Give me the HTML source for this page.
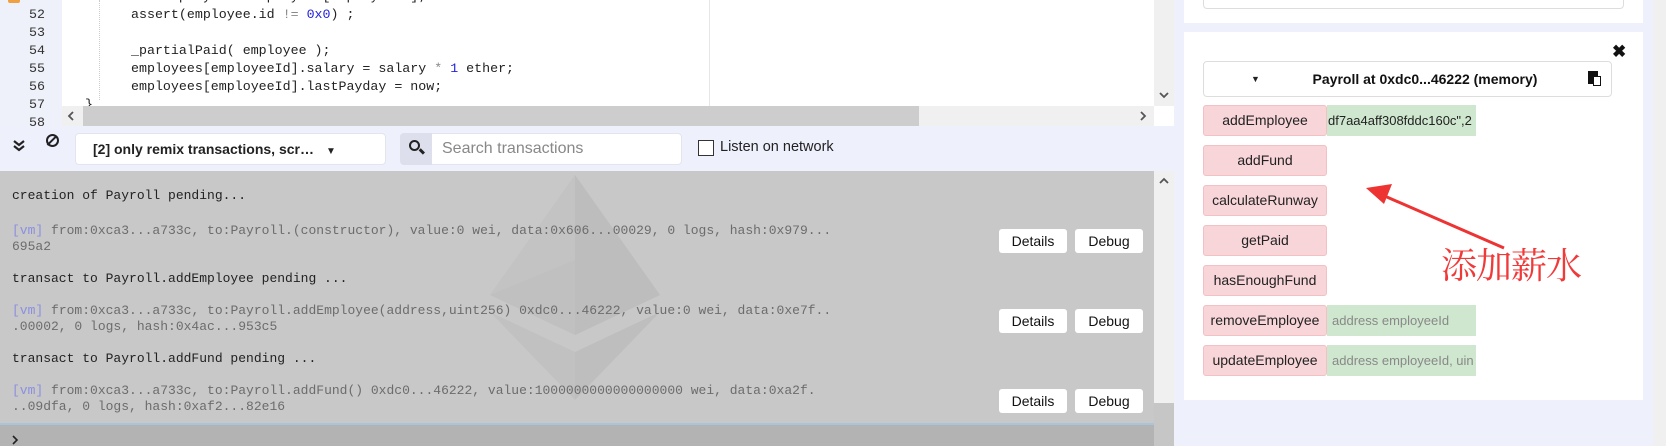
<!DOCTYPE html>
<html><head><meta charset="utf-8"><style>
*{margin:0;padding:0;box-sizing:border-box}
body{width:1666px;height:446px;overflow:hidden;position:relative;background:#eef0fc;font-family:"Liberation Sans",sans-serif}
.a{position:absolute}
.code{font-family:"Liberation Mono",monospace;font-size:13.3px;color:#222;white-space:pre;line-height:18px}
.ln{font-family:"Liberation Mono",monospace;font-size:13.3px;color:#333;text-align:right;width:45px;line-height:18px}
.term{font-family:"Liberation Mono","Noto Serif CJK SC",monospace;font-size:13px;white-space:pre;line-height:16px}
.g{color:#6c6c6c}.vm{color:#8b8fe0}
.tb{background:#fff;border-radius:3px;font-size:14px;text-align:center;line-height:24px;height:24px;width:68px;color:#111}
.fb{left:1203px;width:124px;height:31px;background:#f8d5d8;border:1px solid #f3c0c3;border-radius:3px;font-size:14px;text-align:center;line-height:29px;color:#222}
.in{left:1327px;width:149px;height:31px;background:#cfe7cf;font-size:13px;line-height:31px;padding-left:5px;color:#888;overflow:hidden;white-space:nowrap}
</style></head><body>
<!-- editor -->
<div class="a" style="left:0;top:0;width:62px;height:126px;background:#eef0fa"></div>
<div class="a" style="left:8px;top:-4px;width:12px;height:7px;background:#f0a040;border-radius:2px"></div>
<div class="a" style="left:62px;top:0;width:1092px;height:106px;background:#fff"></div>
<div class="a" style="left:709px;top:0;width:1px;height:106px;background:#e6e6e6"></div>
<div class="a" style="left:99px;top:0;width:0;height:100px;border-left:1px dotted #ccc"></div>
<div class="a ln" style="left:0;top:-12px">51<br>52<br>53<br>54<br>55<br>56<br>57<br>58</div>
<div class="a code" style="left:131px;top:-12px">var employee = employees[employeeId];
assert(employee.id <span style="color:#888">!=</span> <span style="color:#22d">0x0</span>) ;

_partialPaid( employee );
employees[employeeId].salary = salary <span style="color:#888">*</span> <span style="color:#22d">1</span> ether;
employees[employeeId].lastPayday = now;</div>
<div class="a code" style="left:85px;top:96px">}</div>
<div class="a" style="left:62px;top:106px;width:1092px;height:20px;background:#f0f0f0"></div>
<div class="a" style="left:83px;top:106px;width:836px;height:20px;background:#cdcdcd"></div>
<svg class="a" style="left:66px;top:110px" width="10" height="12"><path d="M7 2 L3 6 L7 10" stroke="#555" stroke-width="1.8" fill="none"/></svg>
<svg class="a" style="left:1138px;top:110px" width="10" height="12"><path d="M3 2 L7 6 L3 10" stroke="#555" stroke-width="1.8" fill="none"/></svg>
<div class="a" style="left:1154px;top:0;width:20px;height:106px;background:#f0f0f0"></div>
<svg class="a" style="left:1158px;top:90px" width="12" height="10"><path d="M2 3 L6 7 L10 3" stroke="#555" stroke-width="1.8" fill="none"/></svg>
<div class="a" style="left:1154px;top:106px;width:20px;height:20px;background:#fff"></div>
<!-- toolbar -->
<svg class="a" style="left:12px;top:139px" width="14" height="14"><path d="M2 2 L7 6 L12 2 M2 7 L7 11 L12 7" stroke="#222" stroke-width="2.2" fill="none"/></svg>
<div class="a" style="left:46px;top:134px;width:13px;height:13px;border:2px solid #222;border-radius:50%"></div>
<div class="a" style="left:51px;top:134px;width:2px;height:13px;background:#222;transform:rotate(45deg)"></div>
<div class="a" style="left:75px;top:133px;width:311px;height:32px;background:#fff;border:1px solid #e2e4ee;border-radius:4px;font-size:14px;font-weight:bold;line-height:30px;padding-left:17px;color:#222">[2] only remix transactions, scr…<span style="font-size:10px;margin-left:12px">▼</span></div>
<div class="a" style="left:400px;top:133px;width:282px;height:32px;background:#fff;border:1px solid #e2e4ee;border-radius:4px"></div>
<div class="a" style="left:400px;top:133px;width:32px;height:32px;background:#dde0ec;border-radius:4px 0 0 4px"></div>
<div class="a" style="left:409px;top:140px;width:11px;height:11px;border:2.5px solid #222;border-radius:50%"></div>
<div class="a" style="left:419px;top:150px;width:6px;height:2.5px;background:#222;transform:rotate(45deg)"></div>
<div class="a" style="left:442px;top:140px;font-size:16px;color:#888">Search transactions</div>
<div class="a" style="left:698px;top:140px;width:16px;height:16px;border:1px solid #333;background:#fff"></div>
<div class="a" style="left:720px;top:139px;font-size:14.5px;color:#222">Listen on network</div>
<!-- terminal -->
<div class="a" style="left:0;top:171px;width:1154px;height:252px;background:#c8c8c8"></div>
<svg class="a" style="left:490px;top:175px" width="170" height="225" viewBox="0 0 170 225">
<polygon points="85,0 0,120 85,160 170,120" fill="#c0c0c0"/>
<polygon points="85,0 85,160 170,120" fill="#bdbdbd"/>
<polygon points="85,0 0,120 85,85" fill="#c3c3c3"/>
<polygon points="0,137 85,225 85,177" fill="#c1c1c1"/>
<polygon points="170,137 85,225 85,177" fill="#bebebe"/>
</svg>
<div class="a term" style="left:12px;top:188px;color:#222">creation of Payroll pending...</div>
<div class="a term g" style="left:12px;top:223px"><span class="vm">[vm]</span> from:0xca3...a733c, to:Payroll.(constructor), value:0 wei, data:0x606...00029, 0 logs, hash:0x979...
695a2</div>
<div class="a term" style="left:12px;top:271px;color:#222">transact to Payroll.addEmployee pending ...</div>
<div class="a term g" style="left:12px;top:303px"><span class="vm">[vm]</span> from:0xca3...a733c, to:Payroll.addEmployee(address,uint256) 0xdc0...46222, value:0 wei, data:0xe7f..
.00002, 0 logs, hash:0x4ac...953c5</div>
<div class="a term" style="left:12px;top:351px;color:#222">transact to Payroll.addFund pending ...</div>
<div class="a term g" style="left:12px;top:383px"><span class="vm">[vm]</span> from:0xca3...a733c, to:Payroll.addFund() 0xdc0...46222, value:1000000000000000000 wei, data:0xa2f.
..09dfa, 0 logs, hash:0xaf2...82e16</div>
<div class="a tb" style="left:999px;top:229px">Details</div><div class="a tb" style="left:1075px;top:229px">Debug</div>
<div class="a tb" style="left:999px;top:309px">Details</div><div class="a tb" style="left:1075px;top:309px">Debug</div>
<div class="a tb" style="left:999px;top:389px">Details</div><div class="a tb" style="left:1075px;top:389px">Debug</div>
<div class="a" style="left:0;top:423px;width:1154px;height:2px;background:#a9c4dc"></div>
<div class="a" style="left:0;top:425px;width:1154px;height:21px;background:#b3b3b3"></div>
<svg class="a" style="left:10px;top:434px" width="10" height="12"><path d="M3 2 L7 6 L3 10" stroke="#222" stroke-width="1.6" fill="none"/></svg>
<div class="a" style="left:1154px;top:171px;width:20px;height:275px;background:#f0f0f0"></div>
<div class="a" style="left:1154px;top:403px;width:20px;height:43px;background:#c6c6c6"></div>
<svg class="a" style="left:1158px;top:176px" width="12" height="10"><path d="M2 7 L6 3 L10 7" stroke="#555" stroke-width="1.8" fill="none"/></svg>
<!-- right panel -->
<div class="a" style="left:1653px;top:0;width:13px;height:446px;background:#f0f0f0"></div>
<div class="a" style="left:1184px;top:0;width:459px;height:23px;background:#fff"></div>
<div class="a" style="left:1203px;top:-5px;width:421px;height:14px;border:1px solid #ddd;border-radius:4px"></div>
<div class="a" style="left:1184px;top:32px;width:459px;height:368px;background:#fff"></div>
<div class="a" style="left:1612px;top:42px;font-size:17px;font-weight:bold;color:#111">✖</div>
<div class="a" style="left:1203px;top:61px;width:409px;height:36px;border:1px solid #ddd;border-radius:4px"></div>
<div class="a" style="left:1251px;top:74px;font-size:9px;color:#222">▼</div>
<div class="a" style="left:1290px;top:71px;width:270px;text-align:center;font-size:14px;font-weight:bold;color:#111">Payroll at 0xdc0...46222 (memory)</div>
<div class="a" style="left:1588px;top:71px;width:10px;height:13px;background:#111"></div>
<div class="a" style="left:1593px;top:76px;width:8px;height:10px;background:#fff;border:1.5px solid #111"></div>
<div class="a fb" style="top:105px">addEmployee</div><div class="a in" style="top:105px;color:#222;padding-left:1px">df7aa4aff308fddc160c",2</div>
<div class="a fb" style="top:145px">addFund</div>
<div class="a fb" style="top:185px">calculateRunway</div>
<div class="a fb" style="top:225px">getPaid</div>
<div class="a fb" style="top:265px">hasEnoughFund</div>
<div class="a fb" style="top:305px">removeEmployee</div><div class="a in" style="top:305px">address employeeId</div>
<div class="a fb" style="top:345px">updateEmployee</div><div class="a in" style="top:345px">address employeeId, uin</div>
<svg class="a" style="left:1360px;top:180px" width="160" height="80"><line x1="144" y1="68" x2="20" y2="14" stroke="#ee3333" stroke-width="3"/><polygon points="6,8 32,4 24,24" fill="#ee3333"/></svg>
<div class="a" style="left:1441px;top:238px;font-family:'Noto Serif CJK SC','WenQuanYi Zen Hei',serif;font-size:36px;color:#f03a3a;letter-spacing:-1px">添加薪水</div>
</body></html>
